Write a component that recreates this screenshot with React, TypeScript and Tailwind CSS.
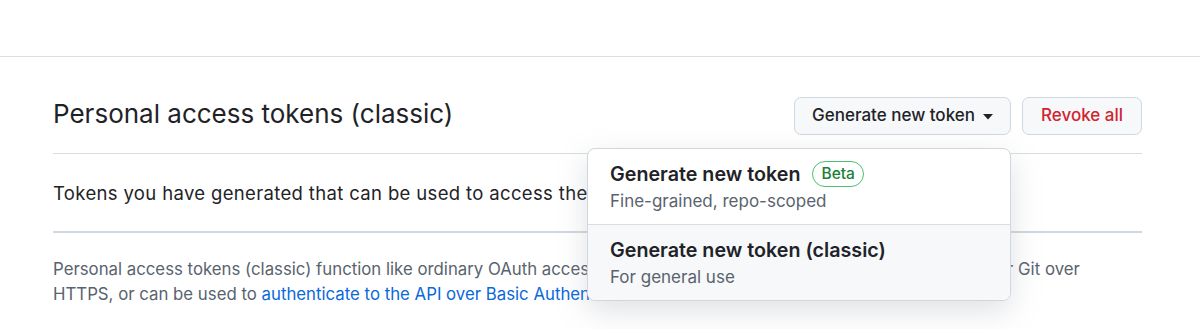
import React from "react";

function Caret() {
  return (
    <svg width="10" height="6" viewBox="0 0 10 6" className="ml-[8px] mt-[1px]" aria-hidden="true">
      <path d="M0 0h10L5 5.5z" fill="#1f2328" />
    </svg>
  );
}

function TokenMenu() {
  return (
    <div className="absolute right-0 top-[calc(100%+13px)] z-10 w-[424px] overflow-hidden rounded-[8px] border border-[#d0d7de] bg-white shadow-[0_10px_30px_rgba(140,149,159,0.28)]">
      <div className="h-[76px] border-b border-[#d8dee4] px-[22px] pt-[12px]">
        <div className="flex items-center gap-[12px]">
          <span className="text-[19.7px] font-semibold leading-[26px] text-[#1f2328]">Generate new token</span>
          <span className="rounded-full border border-[#4ac26b] px-[8px] text-[15.5px] font-medium leading-[24px] text-[#1a7f37]">
            Beta
          </span>
        </div>
        <div className="mt-[2px] text-[17px] leading-[24px] text-[#59636e]">Fine-grained, repo-scoped</div>
      </div>
      <div className="h-[75px] bg-[#f6f8fa] px-[22px] pt-[12px]">
        <div className="text-[19.7px] font-semibold leading-[26px] text-[#1f2328]">Generate new token (classic)</div>
        <div className="mt-[2px] text-[17px] leading-[24px] text-[#59636e]">For general use</div>
      </div>
    </div>
  );
}

export default function App() {
  return (
    <div className="h-[329px] overflow-hidden bg-white font-['Inter','Liberation_Sans',sans-serif] text-[#1f2328]">
      <div className="h-[57px] border-b border-[#d8dee4]" />
      <div className="pl-[53px] pr-[58px] pt-[40px]">
        <div className="flex items-center justify-between border-b border-[#d8dee4] pb-[18px]">
          <h2 className="pb-[4px] text-[26px] font-normal leading-[34px]">Personal access tokens (classic)</h2>
          <div className="flex items-center gap-[11px]">
            <div className="relative">
              <button
                type="button"
                className="flex h-[38px] w-[217px] items-center justify-center rounded-[7px] border border-[#d0d7de] bg-[#f6f8fa] text-[17px] font-medium text-[#1f2328]"
              >
                <span>Generate new token</span>
                <Caret />
              </button>
              <TokenMenu />
            </div>
            <button
              type="button"
              className="h-[38px] w-[120px] rounded-[7px] border border-[#d0d7de] bg-[#f6f8fa] text-[17px] font-medium text-[#d1242f]"
            >
              Revoke all
            </button>
          </div>
        </div>

        <div className="border-b-2 border-[#d0d7de] pb-[26px] pt-[27px]">
          <p className="text-[18.5px] leading-[24px] tracking-[0.35px]">
            Tokens you have generated that can be used to access the GitHub API.
          </p>
        </div>

        <p className="mt-[24px] text-[16.8px] leading-[25px] text-[#59636e]">
          Personal access tokens (classic) function like ordinary OAuth access tokens. They can be used instead of a password for Git over
          <br />
          HTTPS, or can be used to{" "}
          <a href="#" className="text-[#0969da]">
            authenticate to the API over Basic Authentication
          </a>
          .
        </p>
      </div>
    </div>
  );
}
